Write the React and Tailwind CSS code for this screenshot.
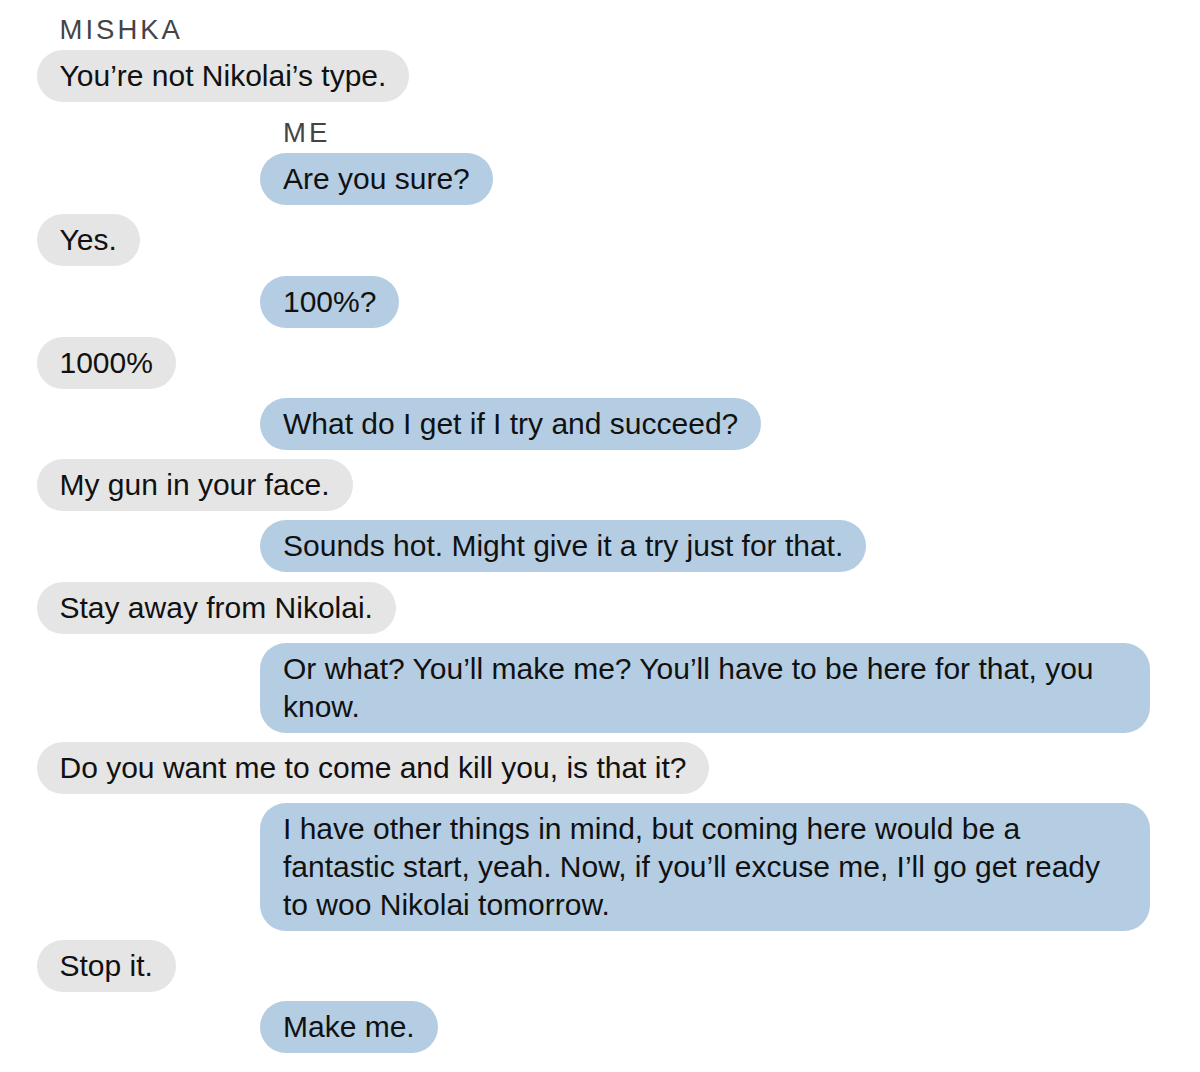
const messages = [
	{ from: "mishka", label: "MISHKA", text: "You’re not Nikolai’s type." },
	{ from: "me", label: "ME", text: "Are you sure?" },
	{ from: "mishka", text: "Yes." },
	{ from: "me", text: "100%?" },
	{ from: "mishka", text: "1000%" },
	{ from: "me", text: "What do I get if I try and succeed?" },
	{ from: "mishka", text: "My gun in your face." },
	{ from: "me", text: "Sounds hot. Might give it a try just for that." },
	{ from: "mishka", text: "Stay away from Nikolai." },
	{
		from: "me",
		text: "Or what? You’ll make me? You’ll have to be here for that, you know.",
	},
	{ from: "mishka", text: "Do you want me to come and kill you, is that it?" },
	{
		from: "me",
		text: "I have other things in mind, but coming here would be a fantastic start, yeah. Now, if you’ll excuse me, I’ll go get ready to woo Nikolai tomorrow.",
	},
	{ from: "mishka", text: "Stop it." },
	{ from: "me", text: "Make me." },
];

const Bubble = ({ from, text }) => (
	<div
		className={`w-fit rounded-[26px] px-[23px] py-[7px] text-[30px] leading-[38px] text-[#111] ${
			from === "me" ? "bg-[#b4cde3]" : "bg-[#e5e5e5]"
		}`}>
		{text}
	</div>
);

export default function App() {
	return (
		<div
			className="min-h-screen bg-white pt-[14px] pl-[36.5px] pr-[50px] flex flex-col gap-[9.2px]"
			style={{ fontFamily: '"Liberation Sans", Arial, sans-serif' }}>
			{messages.map((m, i) => (
				<div
					key={i}
					className={`flex flex-col gap-[4px] ${m.from === "me" ? "ml-[223.5px]" : ""} ${
						m.label && i > 0 ? "mt-[6px]" : ""
					}`}>
					{m.label && (
						<div className="pl-[23px] text-[27.5px] leading-[32px] tracking-[3px] text-[#444]">
							{m.label}
						</div>
					)}
					<Bubble from={m.from} text={m.text} />
				</div>
			))}
		</div>
	);
}
